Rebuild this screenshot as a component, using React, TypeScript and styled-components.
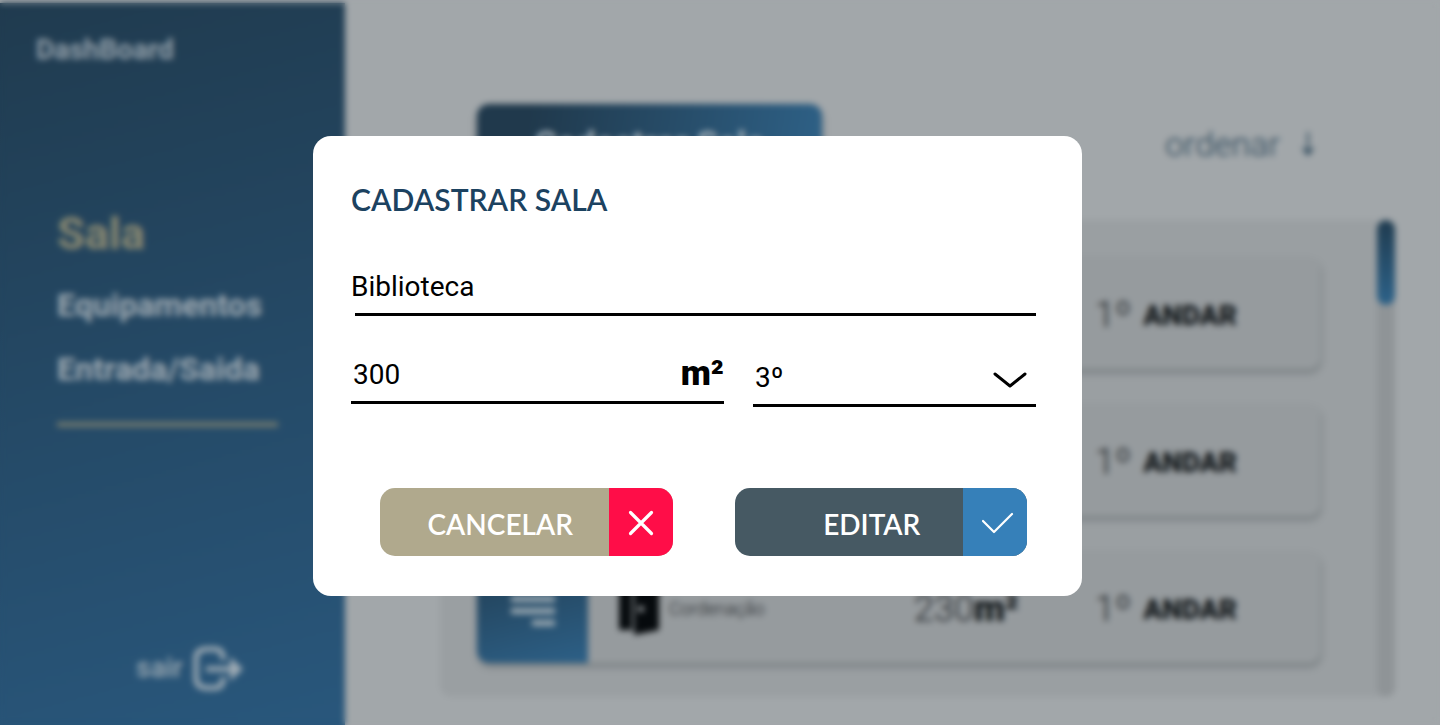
import React from "react";
import styled, { createGlobalStyle } from "styled-components";

const GlobalStyle = createGlobalStyle`
  *, *::before, *::after { box-sizing: border-box; }
  body {
    margin: 0;
    background: #a2a7aa;
    font-family: Roboto, "Liberation Sans", sans-serif;
  }
  button, input, select { font-family: inherit; }
`;

const Page = styled.div`
  display: flex;
  min-height: 100vh;
`;

const Sidebar = styled.aside`
  flex: 0 0 345px;
  display: flex;
  flex-direction: column;
  margin-top: 3px;
  padding: 29px 67px 33px 57px;
  background: linear-gradient(165deg, #203b4f, #29577c);
`;

const Brand = styled.strong`
  margin-left: -21px;
  color: #93a0aa;
  font-size: 28px;
  font-weight: 700;
  line-height: 36px;
`;

const Nav = styled.nav`
  display: flex;
  flex-direction: column;
  gap: 24px;
  margin-top: 139px;
  padding-bottom: 33px;
  border-bottom: 5px solid #71796f;
`;

const NavLink = styled.a<{ $active?: boolean }>`
  color: ${(p) => (p.$active ? "#8a8972" : "#a0abb3")};
  font-size: ${(p) => (p.$active ? 45 : 32)}px;
  font-weight: 700;
  line-height: ${(p) => (p.$active ? 54 : 40)}px;
  text-decoration: none;
`;

const Logout = styled.button`
  display: flex;
  align-items: center;
  gap: 9px;
  align-self: flex-start;
  margin-top: auto;
  margin-left: 79px;
  padding: 0;
  border: 0;
  background: none;
  color: #9eabb4;
  font-size: 28px;
  font-weight: 500;
  line-height: 44px;
`;

const Main = styled.main`
  flex: 1;
  min-width: 0;
  padding: 104px 45px 28px 95px;
`;

const Toolbar = styled.header`
  display: flex;
  align-items: center;
  justify-content: space-between;
  margin-bottom: 36px;
  padding: 0 79px 0 37px;
`;

const NewRoomButton = styled.button`
  width: 345px;
  height: 80px;
  border: 0;
  border-radius: 12px;
  background: linear-gradient(100deg, #20394c 15%, #2e6187);
  box-shadow: 0 4px 6px rgba(0, 0, 0, 0.25);
  color: #9eabb4;
  font-size: 35px;
  font-weight: 700;
`;

const SortButton = styled.button`
  display: flex;
  align-items: center;
  gap: 20px;
  padding: 0;
  border: 0;
  background: none;
  color: #294558;
  font-size: 34px;
  font-weight: 300;
`;

const Panel = styled.section`
  display: flex;
  border-radius: 12px;
  background: #9a9fa2;
`;

const RoomList = styled.ul`
  flex: 1;
  display: flex;
  flex-direction: column;
  gap: 35px;
  margin: 0;
  padding: 37px 57px 34px 37px;
  list-style: none;
`;

const RoomItem = styled.li`
  border-radius: 12px;
  box-shadow: 1px 4px 5px rgba(60, 68, 72, 0.35);
`;

const RoomCard = styled.article`
  display: grid;
  grid-template-columns: 111px 1fr 181px 225px;
  align-items: center;
  height: 112px;
  overflow: hidden;
  border-radius: 12px;
  background: #969b9e;
  color: #1c2226;
  font-size: 36px;
  font-weight: 300;
`;

const RoomTile = styled.div`
  display: grid;
  place-items: center;
  height: 100%;
  padding-bottom: 4px;
  background: linear-gradient(165deg, #203b4f, #2d6087);
`;

const RoomName = styled.div`
  display: flex;
  align-items: center;
  gap: 8px;
  padding: 2px 0 0 29px;
  font-size: 18px;
`;

const RoomArea = styled.div`
  padding-top: 4px;
`;

const Unit = styled.strong`
  color: #12171a;
  font-weight: 900;
`;

const Floor = styled.div`
  display: flex;
  align-items: center;
  gap: 12px;
  padding-top: 4px;
`;

const FloorLabel = styled.strong`
  color: #12171a;
  font-size: 28px;
  font-weight: 900;
`;

const Track = styled.div`
  width: 18px;
  border-radius: 9px;
  background: #8f9497;
`;

const Thumb = styled.div`
  height: 85px;
  border-radius: 9px;
  background: linear-gradient(#203c50, #2d6289);
`;

const Overlay = styled.div`
  position: fixed;
  inset: 0;
  display: flex;
  align-items: center;
  justify-content: center;
  padding: 7px 45px 0 0;
  backdrop-filter: blur(3px);
`;

const Dialog = styled.form`
  width: 100%;
  max-width: 769px;
  padding: 42px 46px 40px 38px;
  border-radius: 18px;
  background: #fff;
`;

const Title = styled.h1`
  margin: 0 0 46px;
  color: #1c4260;
  font-family: Lato, "Liberation Sans", sans-serif;
  font-size: 30px;
  font-weight: 600;
  line-height: 42px;
`;

const TextInput = styled.input<{ $inset: number }>`
  display: block;
  width: 100%;
  height: 50px;
  padding: 0 0 10px;
  border: 0;
  outline: 0;
  background: linear-gradient(#000, #000) right bottom / calc(100% - ${(p) => p.$inset}px) 3px no-repeat;
  color: #000;
  font-size: 28px;
`;

const FieldRow = styled.div`
  display: grid;
  grid-template-columns: minmax(0, 373fr) minmax(0, 283fr);
  align-items: start;
  gap: 29px;
  margin-top: 38px;
`;

const AreaField = styled.label`
  display: flex;
  height: 50px;
  padding-left: 2px;
  border-bottom: 3px solid #000;
`;

const AreaInput = styled.input`
  flex: 1;
  min-width: 0;
  padding: 0 0 7px;
  border: 0;
  outline: 0;
  background: none;
  color: #000;
  font-size: 28px;
`;

const AreaUnit = styled.span`
  font-size: 35px;
  font-weight: 900;
  line-height: 40px;
`;

const SelectField = styled.label`
  display: grid;
  align-items: center;
  height: 50px;
  margin-top: 3px;
  border-bottom: 3px solid #000;

  > * { grid-area: 1 / 1; }
  > svg { justify-self: end; margin: 0 9px 2px 0; pointer-events: none; }
`;

const FloorSelect = styled.select`
  appearance: none;
  width: 100%;
  height: 47px;
  padding: 0 0 7px 2px;
  border: 0;
  outline: 0;
  background: none;
  color: #000;
  font-size: 28px;
`;

const Actions = styled.div`
  display: grid;
  grid-template-columns: 1fr 1fr;
  gap: 62px;
  margin-top: 81px;
  padding: 0 9px 0 29px;
`;

const ActionButton = styled.button<{ $color: string; $shift: number }>`
  display: grid;
  grid-template-columns: 1fr 64px;
  align-items: center;
  height: 68px;
  padding: 0;
  overflow: hidden;
  border: 0;
  border-radius: 15px;
  background: ${(p) => p.$color};
  color: #fff;
  font-family: Lato, "Liberation Sans", sans-serif;
  font-size: 28px;
  font-weight: 600;

  > span:first-child { padding: 4px 0 0 ${(p) => p.$shift}px; }
`;

const ActionIcon = styled.span<{ $color: string; $shift?: number }>`
  display: grid;
  place-items: center;
  height: 100%;
  padding: 2px 0 0 ${(p) => p.$shift ?? 0}px;
  background: ${(p) => p.$color};
`;

const rooms = [1, 2, 3].map((id) => ({ id, name: "Cordenação", area: 230, floor: "1º" }));

const LogoutIcon = () => (
  <svg width="54" height="48" viewBox="0 0 54 48" fill="none" stroke="currentColor" strokeWidth="5">
    <path d="M31 16v-2c0-6-3-9-9-9h-6C8 5 4 8 4 14v20c0 7 4 10 12 10h6c6 0 9-3 9-9v-2" />
    <path d="M14 25h30" />
    <path d="M38 13l13 12-13 12z" fill="currentColor" stroke="none" />
  </svg>
);

const ArrowDownIcon = () => (
  <svg width="16" height="28" viewBox="0 0 16 28" fill="none" stroke="currentColor" strokeWidth="2">
    <path d="M8 2v20" />
    <path d="M1 17l7 9 7-9-7 3z" fill="currentColor" stroke="none" />
  </svg>
);

const LinesIcon = () => (
  <svg width="44" height="42" viewBox="0 0 44 42" fill="#9aa8b1">
    <rect y="0" width="44" height="6" />
    <rect y="12" width="44" height="6" />
    <rect y="24" width="44" height="6" />
    <rect x="21" y="36" width="23" height="6" />
  </svg>
);

const DoorIcon = () => (
  <svg width="44" height="56" viewBox="0 0 44 56" fill="#060a0d">
    <path d="M2 3h13v47H2z" />
    <path d="M17 0l25 4v46l-25 5z" />
    <circle cx="24" cy="29" r="3" fill="#a2a7aa" />
  </svg>
);

const ChevronIcon = () => (
  <svg width="34" height="16" viewBox="0 0 34 16" fill="none" stroke="#000" strokeWidth="3" strokeLinecap="round" strokeLinejoin="round">
    <path d="M2 2l15 12L32 2" />
  </svg>
);

const CloseIcon = () => (
  <svg width="26" height="26" viewBox="0 0 26 26" fill="none" stroke="#fff" strokeWidth="3.2" strokeLinecap="round">
    <path d="M2.5 2.5l21 21M23.500 2.500l-21 21" />
  </svg>
);

const CheckIcon = () => (
  <svg width="32" height="22" viewBox="0 0 32 22" fill="none" stroke="#fff" strokeWidth="2.200" strokeLinecap="round" strokeLinejoin="round">
    <path d="M1 9l11 11L30 2" />
  </svg>
);

export default function App() {
  return (
    <>
      <GlobalStyle />
      <Page inert>
        <Sidebar>
          <Brand>DashBoard</Brand>
          <Nav>
            <NavLink href="#sala" $active>Sala</NavLink>
            <NavLink href="#equipamentos">Equipamentos</NavLink>
            <NavLink href="#entrada-saida">Entrada/Saida</NavLink>
          </Nav>
          <Logout type="button">
            sair
            <LogoutIcon />
          </Logout>
        </Sidebar>
        <Main>
          <Toolbar>
            <NewRoomButton type="button">Cadastrar Sala</NewRoomButton>
            <SortButton type="button">
              ordenar
              <ArrowDownIcon />
            </SortButton>
          </Toolbar>
          <Panel>
            <RoomList>
              {rooms.map((room) => (
                <RoomItem key={room.id}>
                  <RoomCard>
                    <RoomTile><LinesIcon /></RoomTile>
                    <RoomName><DoorIcon />{room.name}</RoomName>
                    <RoomArea>{room.area}<Unit>m²</Unit></RoomArea>
                    <Floor>{room.floor}<FloorLabel>ANDAR</FloorLabel></Floor>
                  </RoomCard>
                </RoomItem>
              ))}
            </RoomList>
            <Track><Thumb /></Track>
          </Panel>
        </Main>
      </Page>
      <Overlay>
        <Dialog role="dialog" aria-modal="true" aria-labelledby="dialog-title" onSubmit={(e) => e.preventDefault()}>
          <Title id="dialog-title">CADASTRAR SALA</Title>
          <TextInput aria-label="Nome da sala" defaultValue="Biblioteca" $inset={4} />
          <FieldRow>
            <AreaField>
              <AreaInput aria-label="Metragem" inputMode="numeric" defaultValue="300" />
              <AreaUnit>m²</AreaUnit>
            </AreaField>
            <SelectField>
              <FloorSelect aria-label="Andar" defaultValue="3">
                <option value="3">3º</option>
              </FloorSelect>
              <ChevronIcon />
            </SelectField>
          </FieldRow>
          <Actions>
            <ActionButton type="button" $color="#b0a98d" $shift={12}>
              <span>CANCELAR</span>
              <ActionIcon $color="#ff0d48"><CloseIcon /></ActionIcon>
            </ActionButton>
            <ActionButton type="submit" $color="#465963" $shift={46}>
              <span>EDITAR</span>
              <ActionIcon $color="#3680b9" $shift={5}><CheckIcon /></ActionIcon>
            </ActionButton>
          </Actions>
        </Dialog>
      </Overlay>
    </>
  );
}
